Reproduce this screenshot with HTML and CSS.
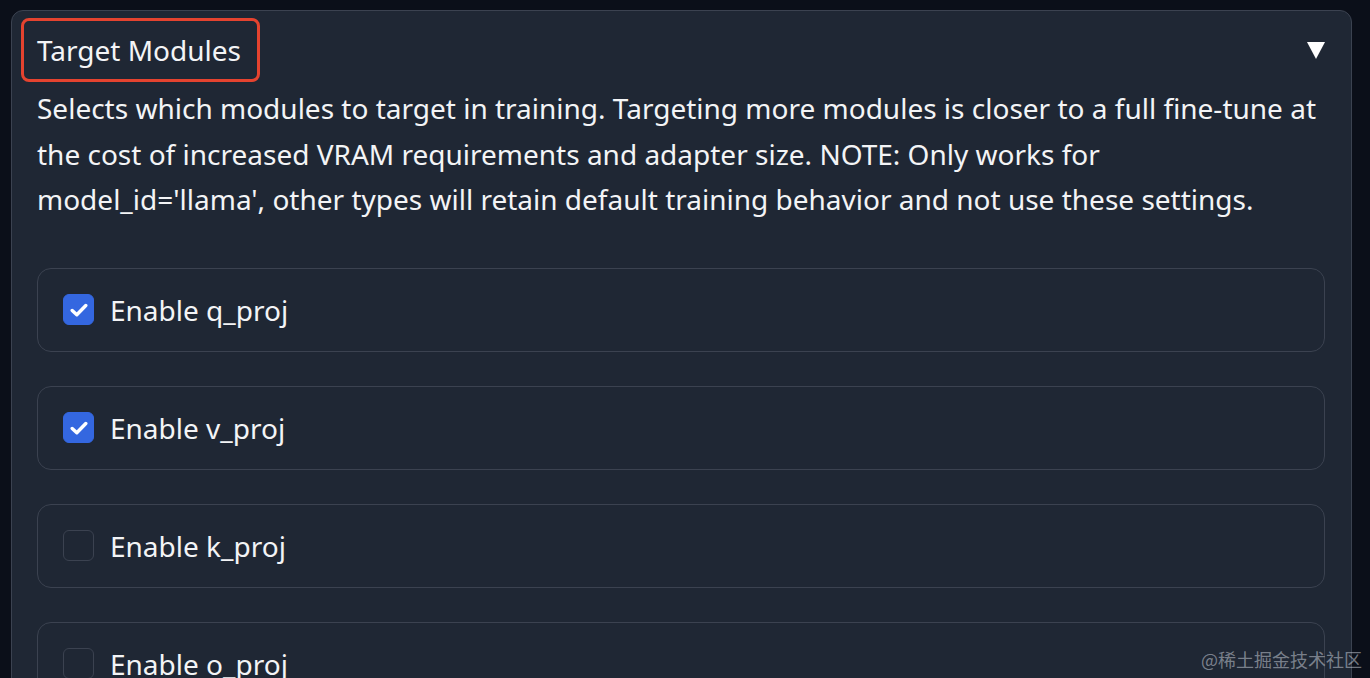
FILE: index.html
```html
<!DOCTYPE html>
<html>
<head>
<meta charset="utf-8">
<link rel="stylesheet" href="styles.css">
</head>
<body>
<div class="panel">
  <div class="header">
    <span class="title">Target Modules</span>
    <svg class="caret" width="18" height="18" viewBox="0 0 18 18"><polygon points="0,1 18,1 9,18" fill="#ffffff"/></svg>
  </div>
  <p class="desc">Selects which modules to target in training. Targeting more modules is closer to a full fine-tune at the cost of increased VRAM requirements and adapter size. NOTE: Only works for model_id='llama', other types will retain default training behavior and not use these settings.</p>
  <div class="rows">
    <label class="row"><span class="box checked"><svg width="18" height="14" viewBox="0 0 18 14"><path d="M2.2 7.5 L6.8 11.8 L15.8 2.5" fill="none" stroke="#fff" stroke-width="3.4" stroke-linecap="round" stroke-linejoin="round"/></svg></span><span class="label">Enable q_proj</span></label>
    <label class="row"><span class="box checked"><svg width="18" height="14" viewBox="0 0 18 14"><path d="M2.2 7.5 L6.8 11.8 L15.8 2.5" fill="none" stroke="#fff" stroke-width="3.4" stroke-linecap="round" stroke-linejoin="round"/></svg></span><span class="label">Enable v_proj</span></label>
    <label class="row"><span class="box"></span><span class="label">Enable k_proj</span></label>
    <label class="row"><span class="box"></span><span class="label">Enable o_proj</span></label>
  </div>
</div>
<div class="watermark">@稀土掘金技术社区</div>
</body>
</html>
```
FILE: styles.css
```css
html, body {
  margin: 0;
  padding: 0;
  background: #0b0f19;
  height: 678px;
  overflow: hidden;
  font-family: "Noto Sans", "Open Sans", sans-serif;
  color: #f3f4f6;
}
.panel {
  margin: 10px 0 0 11px;
  width: 1341px;
  height: 720px;
  background: #1f2734;
  border: 1px solid #3b4250;
  border-radius: 12px;
  padding: 7px 26px 0 25px;
  box-sizing: border-box;
}
.header {
  display: flex;
  justify-content: space-between;
  align-items: center;
}
.title {
  margin-left: -16px;
  border: 3px solid #e5432f;
  border-radius: 8px;
  padding: 0 16px 0 13px;
  height: 58px;
  line-height: 58px;
  font-size: 28px;
}
.desc {
  margin: 4px 0 0 0;
  font-size: 28px;
  line-height: 45.5px;
}
.rows {
  margin-top: 45px;
  display: flex;
  flex-direction: column;
  gap: 34px;
}
.row {
  display: flex;
  align-items: center;
  height: 84px;
  box-sizing: border-box;
  border: 1.5px solid #3b4250;
  border-radius: 14px;
  padding-left: 25px;
  gap: 16px;
}
.box {
  width: 31px;
  height: 31px;
  box-sizing: border-box;
  border: 1.5px solid #3b4250;
  border-radius: 6px;
  display: flex;
  align-items: center;
  justify-content: center;
}
.box.checked {
  background: #3467e0;
  border-color: #3467e0;
}
.label {
  font-size: 28px;
}
.watermark {
  position: absolute;
  right: 8px;
  bottom: 6px;
  font-size: 18px;
  color: rgba(200, 205, 215, 0.55);
  font-family: "Noto Sans CJK SC", sans-serif;
}
```
